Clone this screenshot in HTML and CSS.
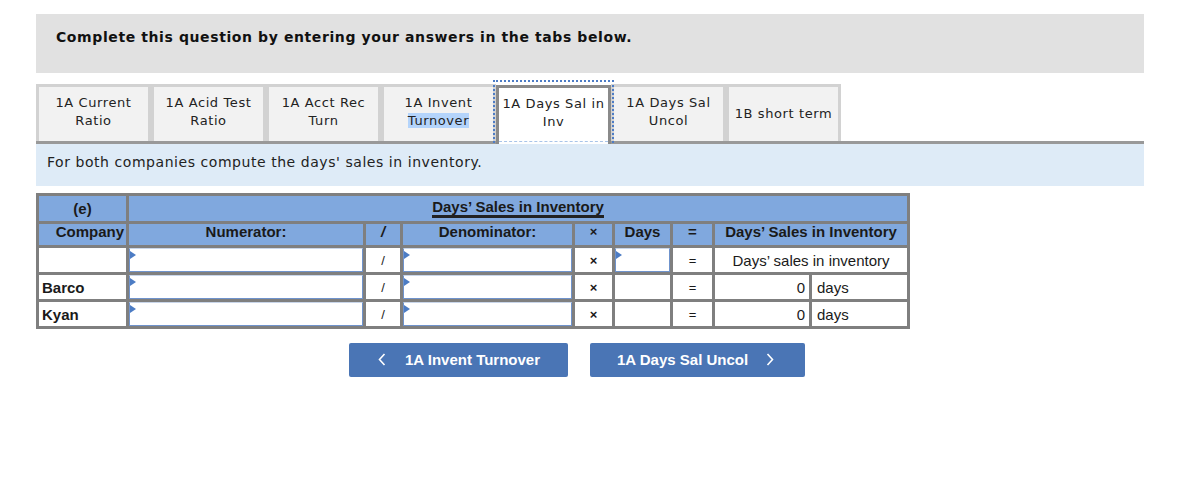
FILE: index.html
```
<!DOCTYPE html>
<html>
<head>
<meta charset="utf-8">
<link rel="stylesheet" href="styles.css">
</head>
<body>
<div class="page">
  <div class="instructions">Complete this question by entering your answers in the tabs below.</div>

  <div class="tabs">
    <div class="tab"><span class="lbl">1A Current<br>Ratio</span></div>
    <div class="tab"><span class="lbl">1A Acid Test<br>Ratio</span></div>
    <div class="tab"><span class="lbl">1A Acct Rec<br>Turn</span></div>
    <div class="tab"><span class="lbl">1A Invent<br><span class="sel">Turnover</span></span></div>
    <div class="tab active"><span class="lbl">1A Days Sal in<br>Inv</span></div>
    <div class="tab"><span class="lbl">1A Days Sal<br>Uncol</span></div>
    <div class="tab one"><span class="lbl">1B short term</span></div>
  </div>

  <div class="info">For both companies compute the days' sales in inventory.</div>

  <table class="grid">
    <colgroup>
      <col class="c-co"><col class="c-num"><col class="c-sl"><col class="c-den"><col class="c-x"><col class="c-days"><col class="c-eq"><col class="c-rn"><col class="c-ru">
    </colgroup>
    <tr class="h1">
      <td class="hd center">(e)</td>
      <td class="hd center" colspan="8"><span class="ul">Days’ Sales in Inventory</span></td>
    </tr>
    <tr class="h2">
      <td class="hd right">Company</td>
      <td class="hd center">Numerator:</td>
      <td class="hd center"><i>/</i></td>
      <td class="hd center">Denominator:</td>
      <td class="hd center sym">×</td>
      <td class="hd center">Days</td>
      <td class="hd center">=</td>
      <td class="hd center" colspan="2">Days’ Sales in Inventory</td>
    </tr>
    <tr class="r">
      <td></td>
      <td class="in"><div class="field"></div></td>
      <td class="center sm">/</td>
      <td class="in"><div class="field"></div></td>
      <td class="center sym sm">×</td>
      <td class="in"><div class="field"></div></td>
      <td class="center sm">=</td>
      <td class="center" colspan="2">Days’ sales in inventory</td>
    </tr>
    <tr class="r">
      <td class="name">Barco</td>
      <td class="in"><div class="field"></div></td>
      <td class="center sm">/</td>
      <td class="in"><div class="field"></div></td>
      <td class="center sym sm">×</td>
      <td></td>
      <td class="center sm">=</td>
      <td class="right val">0</td>
      <td class="unit">days</td>
    </tr>
    <tr class="r">
      <td class="name">Kyan</td>
      <td class="in"><div class="field"></div></td>
      <td class="center sm">/</td>
      <td class="in"><div class="field"></div></td>
      <td class="center sym sm">×</td>
      <td></td>
      <td class="center sm">=</td>
      <td class="right val">0</td>
      <td class="unit">days</td>
    </tr>
  </table>

  <div class="nav">
    <button class="btn prev">
      <svg class="chev" width="8" height="13" viewBox="0 0 8 13"><path d="M6.5 1 L1.5 6.5 L6.5 12" fill="none" stroke="#fff" stroke-width="1.6"/></svg>
      <span>1A Invent Turnover</span>
    </button>
    <button class="btn next">
      <span>1A Days Sal Uncol</span>
      <svg class="chev" width="8" height="13" viewBox="0 0 8 13"><path d="M1.5 1 L6.5 6.5 L1.5 12" fill="none" stroke="#fff" stroke-width="1.6"/></svg>
    </button>
  </div>
</div>
</body>
</html>
```

FILE: styles.css
```
html, body {
  margin: 0;
  padding: 0;
  background: #fff;
}
body {
  font-family: "DejaVu Sans", Verdana, sans-serif;
  color: #222;
}
.page {
  margin: 14px 0 0 36px;
  width: 1108px;
}
.instructions {
  background: #e1e1e1;
  height: 59px;
  box-sizing: border-box;
  padding: 14px 0 0 20px;
  font-size: 14px;
  letter-spacing: 0.6px;
  font-weight: bold;
  color: #111;
  line-height: 18px;
}
.tabs {
  display: flex;
  margin-top: 11px;
  height: 57px;
  border-bottom: 3px solid #999;
  width: 1108px;
}
.tab {
  box-sizing: border-box;
  width: 115px;
  height: 57px;
  border: 3px solid #d2d2d2;
  border-bottom: none;
  background: #f2f2f2;
  font-size: 13px;
  letter-spacing: 0.6px;
  line-height: 18px;
  text-align: center;
  display: flex;
  align-items: center;
  justify-content: center;
  color: #222;
  padding-bottom: 5px;
  white-space: nowrap;
}
.tab.one { padding-bottom: 1px; }
.tab .sel {
  background: #b4d4fb;
}
.tab.active {
  position: relative;
  background: #fff;
  border: 3px solid #8a8a8a;
  border-bottom: none;
  height: 59px;
  margin-bottom: -3px;
  margin-top: 1px;
  padding-bottom: 7px;
}
.tab.active::before {
  content: "";
  position: absolute;
  left: -6px;
  right: -6px;
  top: -8px;
  bottom: 1px;
  border: 2px dotted #4d7cc5;
  border-bottom: none;
}
.tab.active::after {
  content: "";
  position: absolute;
  left: 0;
  right: 0;
  bottom: 2px;
  border-bottom: 1px dashed #a9c4e8;
}
.info {
  background: #deebf7;
  height: 42px;
  box-sizing: border-box;
  padding: 9px 0 0 11px;
  font-size: 14px;
  letter-spacing: 0.55px;
  line-height: 18px;
  color: #222;
}
.grid {
  margin-top: 7px;
  table-layout: fixed;
  border-collapse: separate;
  border-spacing: 3px;
  background: #7f7f7f;
  width: 874px;
  font-family: "Liberation Sans", Arial, sans-serif;
  font-size: 15px;
  line-height: 17px;
  color: #1a1a1a;
}
.c-co { width: 87px; }
.c-num { width: 234px; }
.c-sl { width: 34px; }
.c-den { width: 169px; }
.c-x { width: 37px; }
.c-days { width: 55px; }
.c-eq { width: 39px; }
.c-rn { width: 94px; }
.c-ru { width: 95px; }
.grid td {
  padding: 0;
  background: #fff;
  white-space: nowrap;
  overflow: hidden;
}
.grid td.hd {
  background: #80a8de;
  font-weight: bold;
}
.h1 td { height: 25px; line-height: 25px; vertical-align: top; }
.h2 td { height: 21px; vertical-align: top; line-height: 16px; }
.r td { height: 24px; }
.center { text-align: center; }
.right { text-align: right; }
.grid td.right.hd { padding-right: 2px; }
.ul {
  display: inline-block;
  vertical-align: top;
  border-bottom: 3px solid #222;
  line-height: 16px;
  margin-top: 3px;
}
.sym { font-weight: bold; font-size: 13px; }
.sm { font-size: 13px; }
.name {
  font-weight: bold;
  padding-left: 3px !important;
}
.val { padding-right: 4px !important; }
.unit { padding-left: 5px !important; }
.grid td.in { position: relative; }
.field {
  box-sizing: border-box;
  height: 24px;
  width: 100%;
  border: 1px solid #6f93cc;
  border-top-color: #c9d6ea;
  background: #fff;
  position: relative;
}
.field::before {
  content: "";
  position: absolute;
  left: 0;
  top: 2px;
  border-left: 6px solid #4c7cc4;
  border-top: 4px solid transparent;
  border-bottom: 4px solid transparent;
}
.nav {
  display: flex;
  gap: 22px;
  margin-top: 14px;
  padding-left: 313px;
}
.btn {
  box-sizing: border-box;
  height: 34px;
  background: #4a75b5;
  border: none;
  border-radius: 2px;
  color: #fff;
  font-family: "Liberation Sans", Arial, sans-serif;
  font-weight: bold;
  font-size: 15px;
  display: flex;
  align-items: center;
  padding: 0 0 2px 0;
  cursor: pointer;
}
.btn.prev {
  width: 219px;
  padding-left: 29px;
  gap: 19px;
}
.btn.next {
  width: 215px;
  padding-left: 27px;
  gap: 18px;
}
.chev { display: block; }
```
